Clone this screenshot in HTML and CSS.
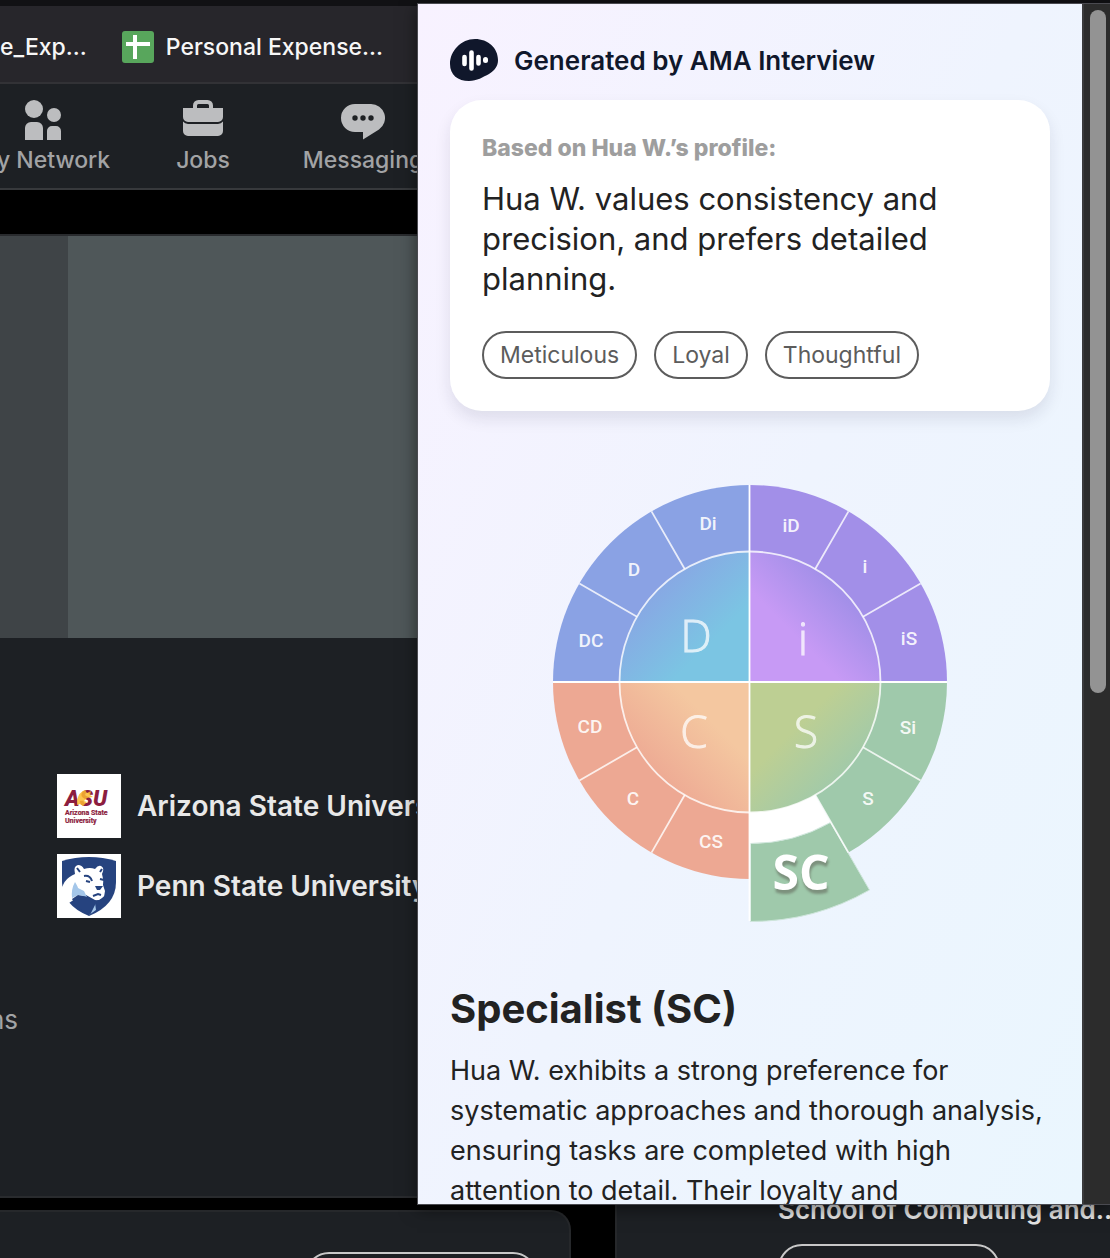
FILE: index.html
```html
<!DOCTYPE html>
<html lang="en">
<head>
<meta charset="utf-8">
<title>AMA Interview</title>
<link rel="stylesheet" href="styles.css">
</head>
<body>
<div class="page">
  <div class="tabstrip"></div>
  <div class="bookmarks">
    <a class="bookmark" href="#">e_Exp...</a>
    <a class="bookmark" href="#">
      <svg width="32" height="32" viewBox="0 0 32 32" aria-hidden="true"><rect width="32" height="32" rx="3" fill="#58a65c"/><path d="M11 4h4v7h13v4H15v13h-4V15H4v-4h7z" fill="#fff"/></svg>
      Personal Expense...
    </a>
  </div>
  <nav class="nav">
    <a class="nav-item" href="#">
      <svg width="48" height="48" viewBox="0 0 48 48" aria-hidden="true" fill="#bcbdbf"><circle cx="15" cy="13" r="9"/><circle cx="35" cy="19" r="7"/><path d="M6 44V32a6 6 0 0 1 6-6h6a6 6 0 0 1 6 6v12zM28 44V35a5 5 0 0 1 5-5h4a5 5 0 0 1 5 5v9z"/></svg>
      <span>My Network</span>
    </a>
    <a class="nav-item" href="#">
      <svg width="48" height="48" viewBox="0 0 48 48" aria-hidden="true"><path d="M16 13V9.500a3.500 3.500 0 0 1 3.500-3.500h9a3.500 3.500 0 0 1 3.500 3.500V13" fill="none" stroke="#bcbdbf" stroke-width="4"/><path d="M4 12h40v9a5 5 0 0 1-5 5H9a5 5 0 0 1-5-5zM4 25.500a7 7 0 0 0 5 2.500h30a7 7 0 0 0 5-2.500V35a5 5 0 0 1-5 5H9a5 5 0 0 1-5-5z" fill="#bcbdbf"/></svg>
      <span>Jobs</span>
    </a>
    <a class="nav-item" href="#">
      <svg width="48" height="48" viewBox="0 0 48 48" aria-hidden="true"><path d="M16 8h16a14 14 0 0 1 8 25.500L24 43.500V36h-8a14 14 0 0 1 0-28z" fill="#bcbdbf"/><g fill="#1d2024"><circle cx="16" cy="22" r="2.700"/><circle cx="24" cy="22" r="2.700"/><circle cx="32" cy="22" r="2.700"/></g></svg>
      <span>Messaging</span>
    </a>
  </nav>
  <main class="content">
    <section class="profile">
      <div class="banner"></div>
      <div class="schools">
        <a class="school" href="#">
          <svg width="64" height="64" viewBox="0 0 64 64" aria-hidden="true"><rect width="64" height="64" fill="#fff"/><text x="8" y="32" class="asu-mark">ASU</text><path d="M20 26q2-8 8-10l2 3 4-2-1 4 3 2-6 1-3 3 3 1-4 4-3-2-3 1z" fill="#fdbb30" fill-opacity="0.850"/><text x="8" y="41" class="asu-text">Arizona State</text><text x="8" y="49" class="asu-text">University</text></svg>
          <span>Arizona State University</span>
        </a>
        <a class="school" href="#">
          <svg width="64" height="64" viewBox="0 0 64 64" aria-hidden="true"><rect width="64" height="64" fill="#fff"/><path d="M5 7Q18 3 32 3t27 4v21q0 23-27 34Q5 51 5 28z" fill="#26437f"/><path d="M18 20q-2-8 3-9 4 0 6 4 6-2 11 0 3-4 6-3 4 2 1 8 2 6 1 11l2 6-1 6q-3 4-9 3l-9-5-6 2-8 4-6 4-4-3-1-8q1-15 14-20z" fill="#fff"/><path d="M5 30q0 9 4 15l3-9 1-12q-6 5-8 10z" fill="#fff"/><path d="M18 28q3 5 3 6l6 3 3 6-9-2-6 3q-1-9 3-16zM32 61v-7l6-5 1 7z" fill="#a4c6e9"/><path d="M15 45l6-4 9 2 5 3q6 2 10-2l8-7q-3 13-10 18l-4-6-6 12q-14-6-18-16z" fill="#26437f"/><path d="M27 22q6-1 8 5M29 27l4 1M43 25l4 1M20 14l3 4M45 15l-2 3M36 42l5-2 3 1" stroke="#26437f" stroke-width="2" fill="none"/><path d="M38 32h8l-3 4h-3z" fill="#26437f"/></svg>
          <span>Penn State University</span>
        </a>
      </div>
      <div class="mutual"><span>connections</span></div>
    </section>
    <section class="panel"><button class="pill" type="button" aria-label="More"></button></section>
    <aside class="side">
      <p class="side-title">School of Computing and...</p>
      <button class="pill" type="button" aria-label="Follow"></button>
    </aside>
  </main>
</div>

<div class="popup">
  <div class="popup-body">
    <header class="brand">
      <svg width="48" height="42" viewBox="0 0 48 42" aria-hidden="true"><path d="M25 0C38 0 48 9 48 21c0 6-3 10-9 14-6 3-12 7-20 7C8 42 0 36 0 25 0 12 11 0 25 0z" fill="#10172b"/><path d="M14.500 18v7M21.500 13.500v16M28.500 18v6.500" stroke="#fff" stroke-width="4.600" stroke-linecap="round"/><path d="M35.500 20.500v1" stroke="#fff" stroke-width="5" stroke-linecap="round"/></svg>
      <span>Generated by AMA Interview</span>
    </header>
    <section class="card">
      <h2 class="card-label">Based on Hua W.’s profile:</h2>
      <p class="card-text">Hua W. values consistency and<br>precision, and prefers detailed<br>planning.</p>
      <div class="chips">
        <span class="chip">Meticulous</span>
        <span class="chip">Loyal</span>
        <span class="chip">Thoughtful</span>
      </div>
    </section>
    <svg class="wheel" width="400" height="442" viewBox="550 482 400 442" role="img" aria-label="DISC wheel, SC selected">
      <defs>
        <linearGradient id="gd" x1="0.200" y1="0.200" x2="0.700" y2="0.700"><stop offset="0" stop-color="#8aa2e4"/><stop offset="1" stop-color="#7bc5e3"/></linearGradient>
        <linearGradient id="gi" x1="0.700" y1="0.300" x2="0.350" y2="0.650"><stop offset="0" stop-color="#a28fe8"/><stop offset="1" stop-color="#c79af5"/></linearGradient>
        <linearGradient id="gc" x1="0.250" y1="0.750" x2="0.700" y2="0.300"><stop offset="0" stop-color="#eda893"/><stop offset="1" stop-color="#f4c7a0"/></linearGradient>
        <linearGradient id="gs" x1="0.750" y1="0.750" x2="0.350" y2="0.350"><stop offset="0" stop-color="#9fc9ab"/><stop offset="1" stop-color="#bdcf93"/></linearGradient>
      </defs>
      <path d="M750 682H553A197 197 0 0 1 750 485z" fill="#8aa2e4"/>
      <path d="M750 682V485A197 197 0 0 1 947 682z" fill="#a28fe8"/>
      <path d="M750 682V879A197 197 0 0 1 553 682z" fill="#eda893"/>
      <path d="M750 682H947A197 197 0 0 1 848.500 852.600z" fill="#9fc9ab"/>
      <path d="M750 682L830.500 823A162 162 0 0 1 750 844z" fill="#fff"/>
      <path d="M830.500 822.500L869.500 890A239.500 239.500 0 0 1 750.500 921.500V843.500A161.500 161.500 0 0 0 830.500 822.500z" fill="#9fc9ab" stroke="#cfe6dc" stroke-width="1"/>
      <path d="M750 682H619.500A130.500 130.500 0 0 1 750 551.500z" fill="url(#gd)"/>
      <path d="M750 682V551.500A130.500 130.500 0 0 1 880.500 682z" fill="url(#gi)"/>
      <path d="M750 682V812.500A130.500 130.500 0 0 1 619.500 682z" fill="url(#gc)"/>
      <path d="M750 682H880.500A130.500 130.500 0 0 1 750 812.500z" fill="url(#gs)"/>
      <g fill="none" stroke="#fff" stroke-opacity="0.800" stroke-width="1.800">
        <circle cx="750" cy="682" r="130.500"/>
        <path d="M684.700 569L651.500 511.400M637 616.700L579.400 583.500M815.200 569L848.500 511.400M863 616.700L920.600 583.500M637 747.300L579.400 780.500M684.700 795L651.500 852.600M863 747.300L920.600 780.500M815.200 795L848.500 852.600"/>
        <path d="M749.500 485V921M553 682H947" stroke-opacity="1"/>
      </g>
      <g class="seg">
        <text x="708" y="530">Di</text><text x="791" y="532">iD</text><text x="634" y="576">D</text><text x="865" y="573">i</text>
        <text x="591" y="647">DC</text><text x="909" y="645">iS</text><text x="590" y="733">CD</text><text x="908" y="734">Si</text>
        <text x="633" y="805">C</text><text x="868" y="805">S</text><text x="711" y="848">CS</text>
      </g>
      <g class="quad"><text x="696" y="652">D</text><text x="803" y="655">i</text><text x="694" y="748">C</text><text x="806" y="748">S</text></g>
      <text class="picked" x="801" y="890">SC</text>
    </svg>
    <h1 class="title">Specialist (SC)</h1>
    <p class="about">Hua W. exhibits a strong preference for<br>systematic approaches and thorough analysis,<br>ensuring tasks are completed with high<br>attention to detail. Their loyalty and</p>
  </div>
  <div class="scroll"><div class="thumb"></div></div>
</div>
</body>
</html>
```
FILE: styles.css
```css
* { box-sizing: border-box; }
body {
  margin: 0;
  height: 100vh;
  overflow: hidden;
  position: relative;
  background: #000;
  font-family: Inter, "Liberation Sans", sans-serif;
}
a { color: inherit; text-decoration: none; }
p, h1, h2 { margin: 0; }
svg { flex: none; display: block; }

/* browser chrome and site behind the popup */
.page { height: 100%; overflow: hidden; }
.tabstrip { height: 6px; background: #111114; }
.bookmarks {
  display: flex;
  align-items: center;
  gap: 35px;
  height: 78px;
  padding-bottom: 6px;
  padding-top: 12px;
  background: #27262b;
  border-bottom: 2px solid #323236;
  color: #f7f7f7;
  font-size: 23px;
  font-weight: 500;
  white-space: nowrap;
}
.bookmark { display: flex; align-items: center; gap: 12px; }
.nav {
  display: flex;
  height: 106px;
  margin-left: -37px;
  padding-top: 12px;
  background: #1d2024;
  border-bottom: 2px solid #37393c;
  color: #a2a3a5;
  font-size: 23px;
  font-weight: 500;
  line-height: 32px;
}
.nav-item {
  flex: 0 0 160px;
  display: flex;
  flex-direction: column;
  align-items: center;
}
.content {
  display: grid;
  grid-template-columns: 571px 1fr;
  column-gap: 44px;
  row-gap: 12px;
  margin-top: 44px;
}
.profile {
  height: 964px;
  background: #1d2024;
  border-top: 2px solid #292b2e;
  border-bottom: 2px solid #292b2e;
}
.banner {
  height: 402px;
  background: linear-gradient(90deg, #3f4447 68px, #4f5759 68px);
}
.schools {
  display: flex;
  flex-direction: column;
  gap: 16px;
  padding: 136px 0 0 57px;
}
.school {
  display: flex;
  align-items: center;
  gap: 16px;
  color: #e8e8e8;
  font-size: 28px;
  font-weight: 600;
  white-space: nowrap;
}
.asu-mark { font: italic 900 22px Roboto, sans-serif; fill: #8c1d40; }
.asu-text { font: 700 7px Roboto, sans-serif; fill: #8c1d40; stroke: #8c1d40; stroke-width: 0.200px; }
.mutual {
  display: flex;
  justify-content: flex-end;
  width: 18px;
  margin-top: 86px;
  overflow: hidden;
  color: #a2a3a5;
  font-size: 26px;
  line-height: 32px;
}
.panel {
  display: flex;
  justify-content: flex-end;
  min-height: 140px;
  padding: 40px 32px 0;
  background: #1d2024;
  border: 2px solid #26282b;
  border-left: 0;
  border-radius: 0 20px 0 0;
}
.pill {
  width: 232px;
  height: 48px;
  border: 2px solid #c8c8c8;
  border-radius: 24px;
  background: transparent;
}
.side {
  grid-column: 2;
  grid-row: 1 / 3;
  display: flex;
  flex-direction: column;
  justify-content: flex-end;
  gap: 18px;
  padding: 0 0 58px 161px;
  background: #1d2024;
  border-left: 2px solid #26282b;
  overflow: hidden;
}
.side .pill { width: 222px; }
.side-title {
  color: #e8e8e8;
  font-size: 26px;
  font-weight: 600;
  line-height: 32px;
  white-space: nowrap;
}

/* extension popup over the page */
.popup {
  position: absolute;
  inset: 3px 0 53px 417px;
  display: flex;
  border: 1px solid #4a4a50;
  border-right: 0;
  box-shadow: 0 4px 16px rgba(0, 0, 0, 0.500);
}
.popup-body {
  flex: 1;
  min-width: 0;
  overflow: hidden;
  padding: 36px 32px 0;
  background: linear-gradient(115deg, #f8f2ff, #eff4fe 50%, #eaf6fe);
  color: #222;
}
.brand {
  display: flex;
  align-items: center;
  gap: 16px;
  height: 40px;
  color: #10172b;
  font-size: 26px;
  font-weight: 600;
}
.card {
  margin-top: 20px;
  padding: 32px;
  border-radius: 32px;
  background: #fff;
  box-shadow: 0 8px 16px rgba(30, 30, 60, 0.100);
}
.card-label {
  color: #9e9e9e;
  font-size: 23px;
  font-weight: 800;
  line-height: 32px;
}
.card-text { margin-top: 15px; font-size: 31px; line-height: 40px; white-space: nowrap; }
.chips { display: flex; gap: 17px; margin-top: 32px; }
.chip {
  padding: 0 16px;
  border: 2px solid #5c5c5c;
  border-radius: 24px;
  color: #5c5c5c;
  font-size: 23px;
  line-height: 44px;
}
.wheel { margin: 71px auto 0; }
.seg { font: 500 19px Roboto, sans-serif; fill: #fff; fill-opacity: 0.900; text-anchor: middle; }
.quad {
  font: 300 44px "Open Sans", sans-serif;
  fill: #fff;
  stroke: #fff;
  stroke-width: 1px;
  opacity: 0.750;
  text-anchor: middle;
}
.picked {
  font: 700 48px "Open Sans", sans-serif;
  fill: #fff;
  text-anchor: middle;
  filter: drop-shadow(1px 4px 1px rgba(90, 90, 80, 0.500));
}
.title { margin-top: 61px; font-size: 40px; font-weight: 700; line-height: 48px; }
.about { margin-top: 18px; font-size: 27px; line-height: 40px; white-space: nowrap; }
.scroll {
  flex: 0 0 28px;
  padding: 6px 4px 0 6px;
  background: #2c2c2c;
  border-left: 2px solid #3a3a3c;
}
.thumb { height: 57.2%; border-radius: 8px; background: #939393; }
```
